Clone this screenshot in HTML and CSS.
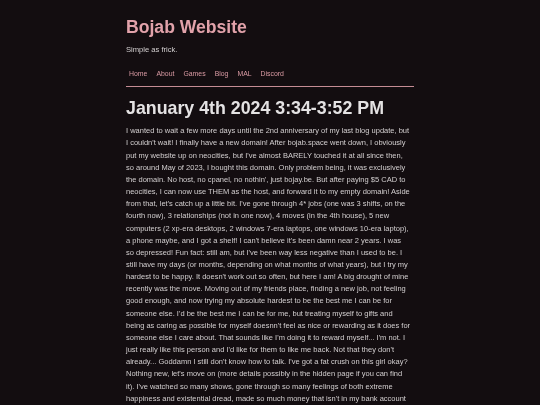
FILE: index.html
```html
<!DOCTYPE html>
<html lang="en">
<head>
<meta charset="utf-8">
<title>Bojab Website</title>
<link rel="stylesheet" href="styles.css">
</head>
<body>
<div class="wrap">
  <header class="site-header">
    <h1 class="site-title">Bojab Website</h1>
    <p class="tagline">Simple as frick.</p>
    <nav class="nav">
      <a href="#">Home</a>
      <a href="#">About</a>
      <a href="#">Games</a>
      <a href="#">Blog</a>
      <a href="#">MAL</a>
      <a href="#">Discord</a>
    </nav>
  </header>
  <main>
    <h2 class="post-title">January 4th 2024 3:34-3:52 PM</h2>
    <p class="post-body">I wanted to wait a few more days until the 2nd anniversary of my last blog update, but I couldn't wait! I finally have a new domain! After bojab.space went down, I obviously put my website up on neocities, but I've almost BARELY touched it at all since then, so around May of 2023, I bought this domain. Only problem being, it was exclusively the domain. No host, no cpanel, no nothin', just bojay.be. But after paying $5 CAD to neocities, I can now use THEM as the host, and forward it to my empty domain! Aside from that, let's catch up a little bit. I've gone through 4* jobs (one was 3 shifts, on the fourth now), 3 relationships (not in one now), 4 moves (in the 4th house), 5 new computers (2 xp-era desktops, 2 windows 7-era laptops, one windows 10-era laptop), a phone maybe, and I got a shelf! I can't believe it's been damn near 2 years. I was so depressed! Fun fact: still am, but I've been way less negative than I used to be. I still have my days (or months, depending on what months of what years), but I try my hardest to be happy. It doesn't work out so often, but here I am! A big drought of mine recently was the move. Moving out of my friends place, finding a new job, not feeling good enough, and now trying my absolute hardest to be the best me I can be for someone else. I'd be the best me I can be for me, but treating myself to gifts and being as caring as possible for myself doesnn't feel as nice or rewarding as it does for someone else I care about. That sounds like I'm doing it to reward myself... I'm not. I just really like this person and I'd like for them to like me back. Not that they don't already... Goddamn I still don't know how to talk. I've got a fat crush on this girl okay? Nothing new, let's move on (more details possibly in the hidden page if you can find it). I've watched so many shows, gone through so many feelings of both extreme happiness and existential dread, made so much money that isn't in my bank account</p>
  </main>
</div>
</body>
</html>
```
FILE: styles.css
```css
html, body {
  margin: 0;
  padding: 0;
  background: #130d10;
}
body {
  font-family: "Liberation Sans", Arial, sans-serif;
  color: #cfcbcc;
  -webkit-font-smoothing: antialiased;
}
.wrap {
  width: 288px;
  margin: 0 auto;
  padding-top: 17px;
  will-change: transform;
}
.site-title {
  margin: 0;
  font-size: 17.6px;
  line-height: 21px;
  font-weight: bold;
  color: #e2a2aa;
}
.tagline {
  margin: 7px 0 0;
  font-size: 7.6px;
  line-height: 10px;
  color: #d4d0d1;
}
.nav {
  display: flex;
  gap: 3px;
  margin-top: 14px;
  padding-bottom: 7px;
  border-bottom: 1px solid #c58c94;
}
.nav a {
  padding: 0 3px;
  font-size: 6.9px;
  line-height: 10px;
  color: #d99aa3;
  text-decoration: none;
}
.post-title {
  margin: 10.5px 0 0;
  font-size: 17.8px;
  line-height: 21px;
  font-weight: bold;
  color: #e4e2e3;
}
.post-body {
  margin: 6.8px 0 0;
  padding-right: 3px;
  font-size: 7.5px;
  line-height: 12.15px;
  color: #d2cecf;
}
```
